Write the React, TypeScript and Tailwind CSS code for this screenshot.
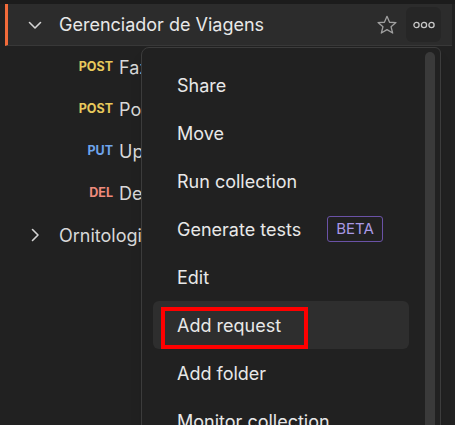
import React from 'react';

type Req = { method: 'POST' | 'PUT' | 'DEL'; name: string };

const requests: Req[] = [
  { method: 'POST', name: 'Fazer reserva' },
  { method: 'POST', name: 'Postar avaliação' },
  { method: 'PUT', name: 'Update viagem' },
  { method: 'DEL', name: 'Deletar viagem' },
];

const methodColor: Record<Req['method'], string> = {
  POST: 'text-[#e8c95c]',
  PUT: 'text-[#6ea4ec]',
  DEL: 'text-[#ef8b7c]',
};

const menuItems = [
  'Share',
  'Move',
  'Run collection',
  'Generate tests',
  'Edit',
  'Add request',
  'Add folder',
  'Monitor collection',
];

const ChevronDown = () => (
  <svg width="16" height="16" viewBox="0 0 16 16" fill="none" stroke="#d4d4d4" strokeWidth="1.6" strokeLinecap="round" strokeLinejoin="round">
    <path d="M2.5 5.5 L8 11 L13.5 5.5" />
  </svg>
);

const ChevronRight = () => (
  <svg width="16" height="16" viewBox="0 0 16 16" fill="none" stroke="#d4d4d4" strokeWidth="1.6" strokeLinecap="round" strokeLinejoin="round">
    <path d="M5.5 2.5 L11 8 L5.5 13.5" />
  </svg>
);

const Star = () => (
  <svg width="22" height="22" viewBox="0 0 24 24" fill="none" stroke="#a0a0a0" strokeWidth="1.4" strokeLinejoin="round">
    <path d="M12 2.5 L14.8 9 L21.8 9.4 L16.4 13.9 L18.2 20.8 L12 17 L5.8 20.8 L7.6 13.9 L2.2 9.4 L9.2 9 Z" />
  </svg>
);

const Dots = () => (
  <svg width="22" height="8" viewBox="0 0 22 8" fill="none" stroke="#c8c8c8" strokeWidth="1.3">
    <circle cx="3.5" cy="4" r="2.6" />
    <circle cx="11" cy="4" r="2.6" />
    <circle cx="18.5" cy="4" r="2.6" />
  </svg>
);

export default function App() {
  return (
    <div
      className="relative w-[455px] h-[425px] overflow-hidden bg-[#212121] text-[#e4e4e4]"
      style={{ fontFamily: 'Inter, "Noto Sans", sans-serif' }}
    >
      <div className="h-[4px] bg-[#1c1c1c]" />

      {/* Collection header */}
      <div className="ml-[5px] mr-[3px] h-[42px] flex items-center border-l-[3px] border-[#f26b3a] bg-[#2c2c2c] border-b border-b-[#383838]">
        <div className="w-[35px] flex justify-end">
          <ChevronDown />
        </div>
        <span className="ml-[16px] text-[18px] text-[#e8e8e8] whitespace-nowrap">Gerenciador de Viagens</span>
        <div className="ml-auto flex items-center gap-[8px] pr-[11px]">
          <Star />
          <div className="w-[35px] h-[35px] rounded-md bg-[#262626] flex items-center justify-center">
            <Dots />
          </div>
        </div>
      </div>

      {/* Requests */}
      {requests.map((r, i) => (
        <div key={i} className="h-[42px] flex items-center whitespace-nowrap">
          <span className={`w-[113px] text-right text-[12.5px] font-bold ${methodColor[r.method]}`}>{r.method}</span>
          <span className="ml-[6px] text-[18px] text-[#d8d8d8]">{r.name}</span>
        </div>
      ))}

      <div className="h-[42px] flex items-center whitespace-nowrap">
        <div className="w-[43px] flex justify-end">
          <ChevronRight />
        </div>
        <span className="ml-[16px] text-[18px] text-[#d8d8d8]">Ornitologia</span>
      </div>

      {/* Dropdown menu */}
      <div className="absolute left-[141px] top-[47px] w-[300px] h-[400px] bg-[#212121] border border-[#3c3c3c] rounded-tl-[8px] rounded-tr-[6px] shadow-lg">
        <div className="absolute right-[5px] top-[4px] w-[10px] h-[400px] rounded-full bg-[#3a3a3a]" />
        <div className="pt-[13px] pl-[11px] pr-[31px] flex flex-col">
          {menuItems.map((label) => (
            <div
              key={label}
              className={`relative h-[48px] flex items-center pl-[24px] rounded-[6px] text-[18px] text-[#e8e8e8] whitespace-nowrap ${
                label === 'Add request' ? 'bg-[#2e2e2e]' : ''
              }`}
            >
              <span>{label}</span>
              {label === 'Generate tests' && (
                <span className="ml-[26px] px-[8px] h-[26px] flex items-center rounded-[3px] border border-[#6a52a6] text-[15px] text-[#a999e6]">
                  BETA
                </span>
              )}
              {label === 'Add request' && (
                <div className="absolute left-[8px] top-[6px] w-[147px] h-[42px] border-[4px] border-[#ff0000]" />
              )}
            </div>
          ))}
        </div>
      </div>
    </div>
  );
}
